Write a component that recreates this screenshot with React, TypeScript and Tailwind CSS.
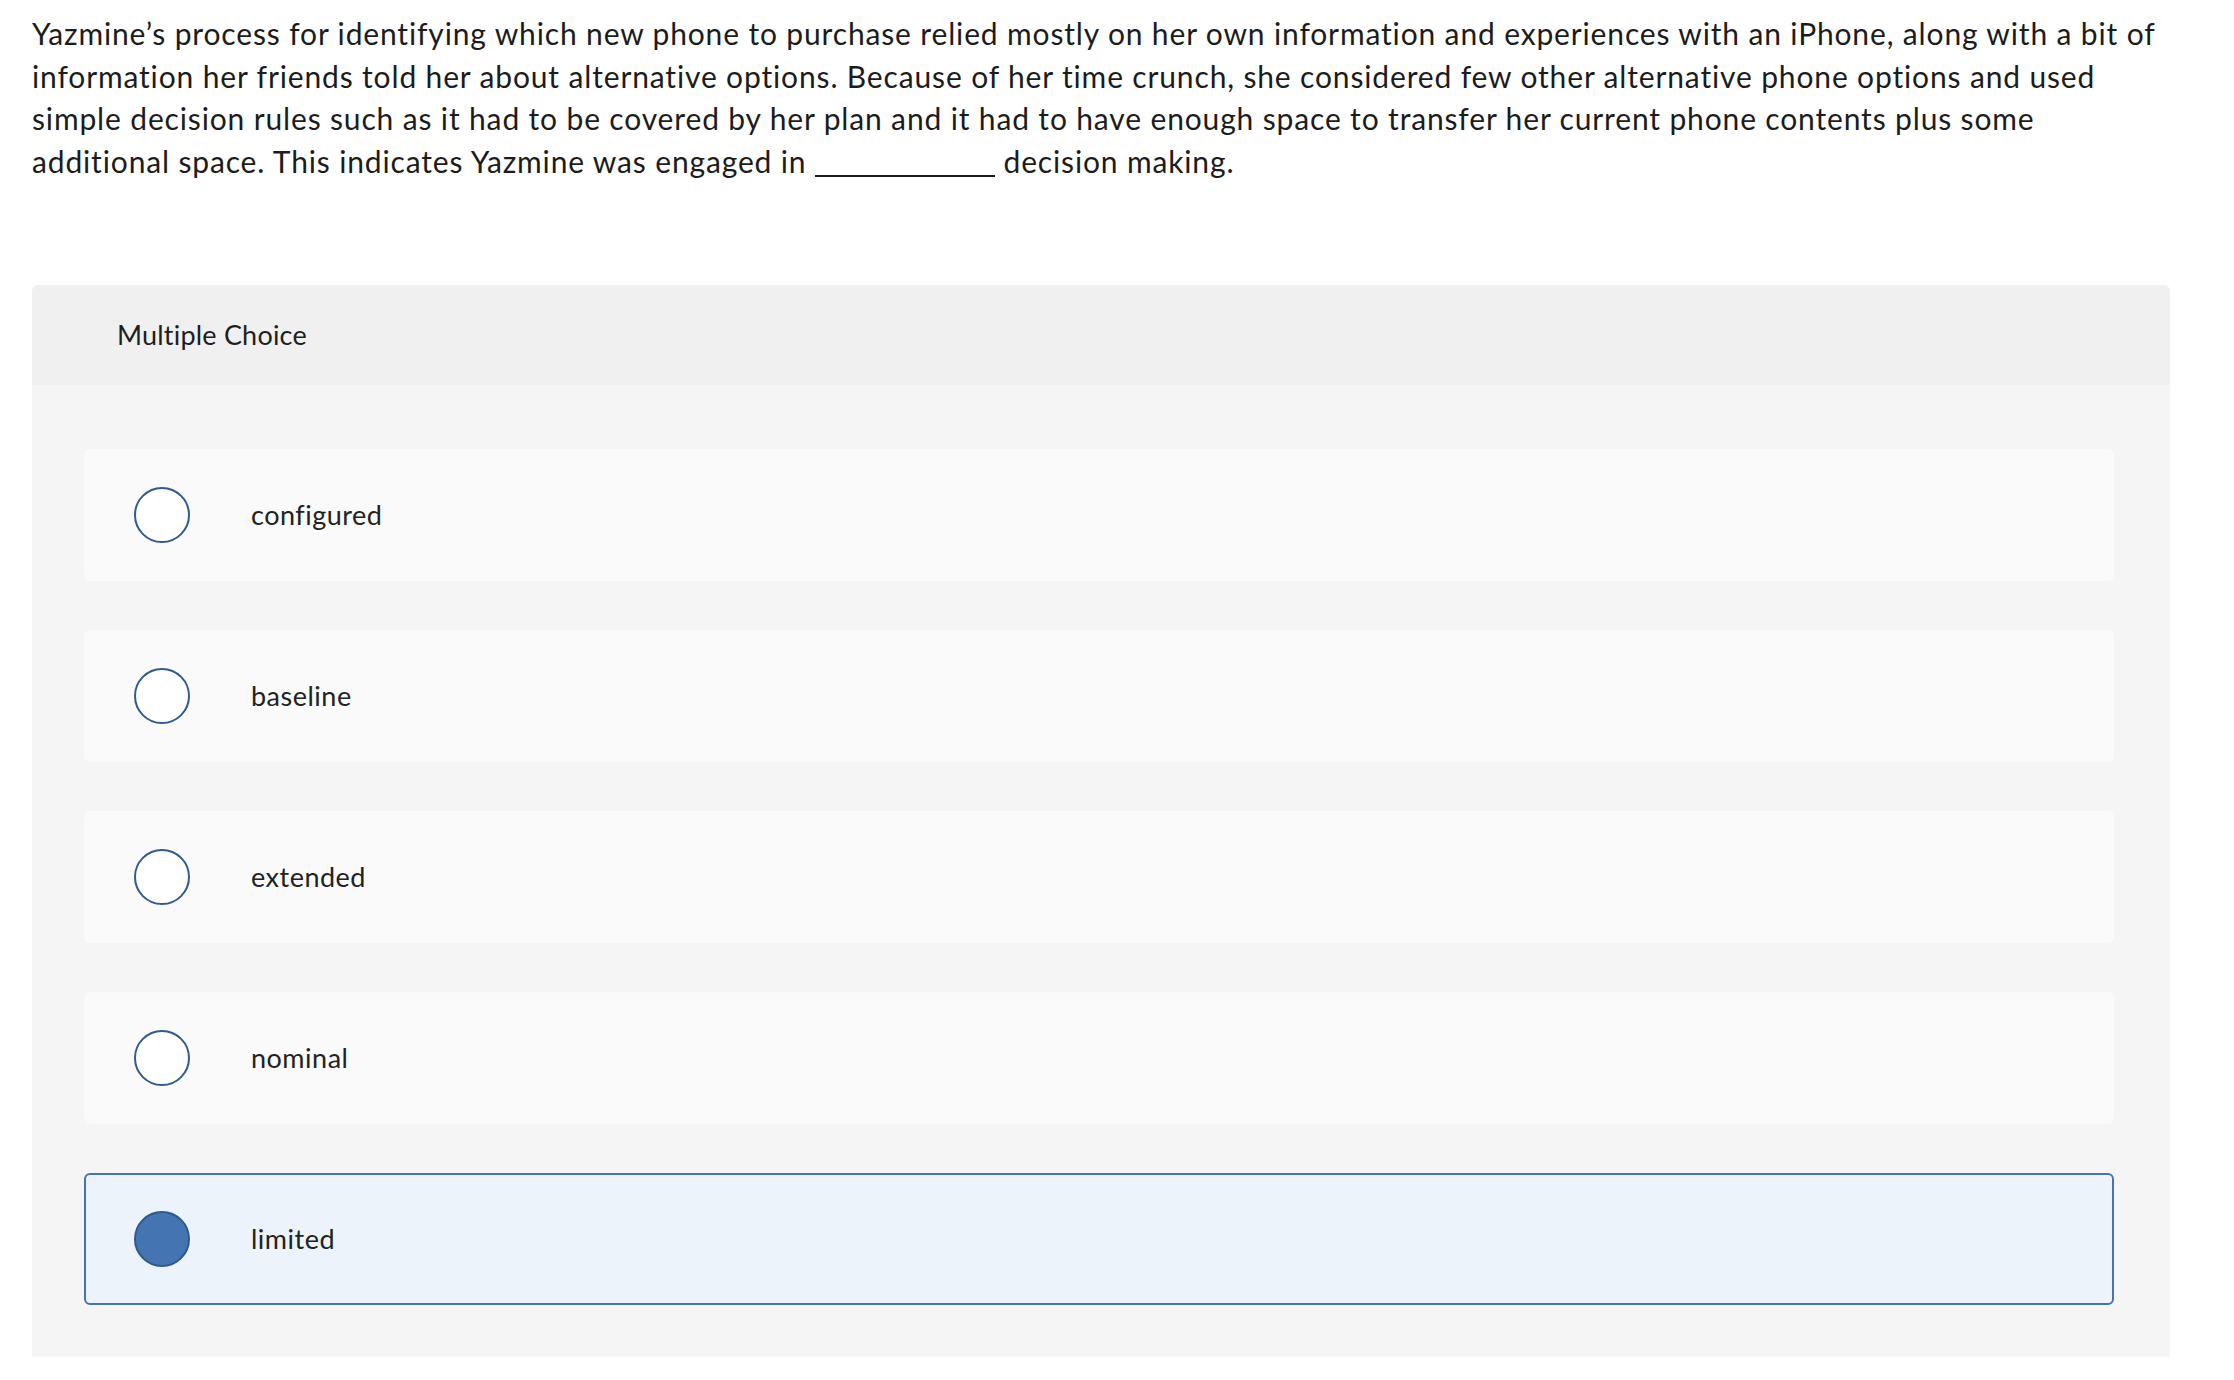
import { useState } from "react";

const options = ["configured", "baseline", "extended", "nominal", "limited"];

export default function App() {
  const [selected, setSelected] = useState("limited");

  return (
    <div
      className="min-h-screen bg-white pt-[12px] text-[#1c1c1c]"
      style={{ fontFamily: "Lato, 'Noto Sans', sans-serif" }}
    >
      <div className="ml-[32px] w-[2138px]">
        <p className="text-[30px] leading-[42.7px] tracking-[0.85px]">
          Yazmine’s process for identifying which new phone to purchase relied mostly on her own
          information and experiences with an iPhone, along with a bit of information her friends
          told her about alternative options. Because of her time crunch, she considered few other
          alternative phone options and used simple decision rules such as it had to be covered by
          her plan and it had to have enough space to transfer her current phone contents plus some
          additional space. This indicates Yazmine was engaged in{" "}
          <span className="inline-block w-[180px] border-b-2 border-[#1c1c1c] align-[-4px]" />{" "}
          decision making.
        </p>

        <div className="mt-[102px]">
          <div className="flex h-[100px] items-center rounded-t-[6px] bg-[#f0f0f0] pl-[85px] text-[27px] tracking-[0.2px] text-[#1f1f1f]">
            Multiple Choice
          </div>
          <div className="flex flex-col gap-[49px] bg-[#f5f5f5] pb-[52px] pl-[52px] pr-[56px] pt-[64px]">
            {options.map((opt) => {
              const isOn = opt === selected;
              return (
                <button
                  key={opt}
                  type="button"
                  onClick={() => setSelected(opt)}
                  className={`flex h-[132px] items-center gap-[61px] rounded-[6px] text-left ${
                    isOn
                      ? "border-2 border-[#4574b4] bg-[#ecf3fb] pl-[48px]"
                      : "bg-[#fafafa] pl-[50px]"
                  }`}
                >
                  <span
                    className={`h-[56px] w-[56px] shrink-0 rounded-full border-2 ${
                      isOn ? "border-[#2d5a8e] bg-[#4574b3]" : "border-[#2f5b8f] bg-white"
                    }`}
                  />
                  <span className="text-[27px] tracking-[0.5px] text-[#222]">{opt}</span>
                </button>
              );
            })}
          </div>
        </div>
      </div>
    </div>
  );
}
